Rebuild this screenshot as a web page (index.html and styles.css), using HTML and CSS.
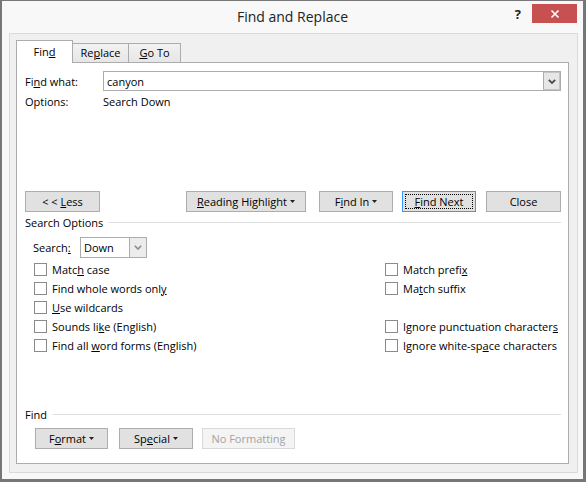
FILE: index.html
```html
<!DOCTYPE html>
<html>
<head>
<meta charset="utf-8">
<link rel="stylesheet" href="styles.css">
</head>
<body>
<div class="window">
  <div class="titlebar">
    <div class="title">Find and Replace</div>
    <div class="controls">
      <span class="help">?</span>
      <span class="close"><svg width="10" height="10" viewBox="0 0 10 10"><path d="M1.5 1.5 L8.5 8.5 M8.5 1.5 L1.5 8.5" stroke="#fff" stroke-width="1.6" fill="none"/></svg></span>
    </div>
  </div>
  <div class="client">
    <div class="tabs">
      <div class="tab tab-active tab-find">Fin<u>d</u></div>
      <div class="tab tab-replace">Re<u>p</u>lace</div>
      <div class="tab tab-goto"><u>G</u>o To</div>
    </div>
    <div class="panel">
      <div class="find-row">
        <span class="label">Fi<u>n</u>d what:</span>
        <div class="input">
          <span class="input-text">canyon</span>
          <span class="drop drop-dark"><svg width="8" height="5" viewBox="0 0 8 5"><path d="M0.8 0.8 L4 4 L7.2 0.8" stroke="#4a4a4a" stroke-width="1.8" fill="none"/></svg></span>
        </div>
      </div>
      <div class="opt-row">
        <span class="label">Options:</span>
        <span>Search Down</span>
      </div>
      <div class="btn-row">
        <button class="btn btn-less"><span>&lt; &lt;&nbsp;<u>L</u>ess</span></button>
        <button class="btn btn-reading"><span><u>R</u>eading Highlight</span><svg class="caret" width="5" height="3" viewBox="0 0 5 3"><path d="M0 0 H5 L2.5 3 Z" fill="#222"/></svg></button>
        <button class="btn btn-findin"><span>F<u>i</u>nd In</span><svg class="caret" width="5" height="3" viewBox="0 0 5 3"><path d="M0 0 H5 L2.5 3 Z" fill="#222"/></svg></button>
        <button class="btn btn-next"><span><u>F</u>ind Next</span></button>
        <button class="btn btn-close">Close</button>
      </div>
      <div class="group-head">
        <span>Search Options</span>
        <span class="rule"></span>
      </div>
      <div class="search-row">
        <span class="search-label">Search<u>:</u></span>
        <div class="select">
          <span class="input-text">Down</span>
          <span class="drop drop-light"><svg width="8" height="5" viewBox="0 0 8 5"><path d="M0.8 0.8 L4 4 L7.2 0.8" stroke="#8a8a8a" stroke-width="1.6" fill="none"/></svg></span>
        </div>
      </div>
      <div class="checks">
        <label class="check"><span class="cb"></span><span>Matc<u>h</u> case</span></label>
        <label class="check"><span class="cb"></span><span>Match prefi<u>x</u></span></label>
        <label class="check"><span class="cb"></span><span>Find whole words onl<u>y</u></span></label>
        <label class="check"><span class="cb"></span><span>Ma<u>t</u>ch suffix</span></label>
        <label class="check"><span class="cb"></span><span><u>U</u>se wildcards</span></label>
        <span class="check"></span>
        <label class="check"><span class="cb"></span><span>Sounds li<u>k</u>e (English)</span></label>
        <label class="check"><span class="cb"></span><span>Ignore punctuation character<u>s</u></span></label>
        <label class="check"><span class="cb"></span><span>Find all <u>w</u>ord forms (English)</span></label>
        <label class="check"><span class="cb"></span><span>Ignore white-sp<u>a</u>ce characters</span></label>
      </div>
      <div class="bottom">
        <div class="group-head group-find">
          <span>Find</span>
          <span class="rule"></span>
        </div>
        <div class="bottom-btns">
          <button class="btn btn-format"><span>F<u>o</u>rmat</span><svg class="caret" width="5" height="3" viewBox="0 0 5 3"><path d="M0 0 H5 L2.5 3 Z" fill="#222"/></svg></button>
          <button class="btn btn-special"><span>Sp<u>e</u>cial</span><svg class="caret" width="5" height="3" viewBox="0 0 5 3"><path d="M0 0 H5 L2.5 3 Z" fill="#222"/></svg></button>
          <button class="btn btn-disabled">No Formatting</button>
        </div>
      </div>
    </div>
  </div>
</div>
</body>
</html>
```
FILE: styles.css
```css
* { box-sizing: border-box; }
html, body { margin: 0; padding: 0; }
body {
  width: 586px;
  height: 482px;
  font-family: "Open Sans", "Noto Sans", sans-serif;
  font-size: 11px;
  color: #000;
  background: #fff;
}
u { text-underline-offset: 1px; }

.window {
  width: 586px;
  height: 482px;
  border-style: solid;
  border-color: #777777;
  border-width: 1px 3px 3px 2px;
  background: #f8f8f8;
  display: flex;
  flex-direction: column;
}

.titlebar {
  height: 32px;
  flex: none;
  display: grid;
  grid-template-columns: 1fr auto 1fr;
}
.title {
  grid-column: 2;
  font-size: 14px;
  line-height: 32px;
  color: #222;
}
.controls {
  grid-column: 3;
  display: flex;
  justify-content: flex-end;
  align-items: flex-start;
}
.help {
  font-weight: bold;
  font-size: 13px;
  line-height: 18px;
  margin-top: 4px;
  margin-right: 11px;
  color: #222;
}
.close {
  width: 45px;
  height: 19px;
  margin-top: 3px;
  margin-right: 6px;
  background: #c75050;
  display: flex;
  align-items: center;
  justify-content: center;
}

.client {
  flex: 1;
  margin: 0 5px 6px 7px;
  border: 1px solid #dadada;
  background: #f0f0f0;
  padding: 6px 8px 8px 6px;
  display: flex;
  flex-direction: column;
}

.tabs {
  height: 22px;
  flex: none;
  display: flex;
  align-items: flex-end;
}
.tab {
  position: relative;
  height: 19px;
  border: 1px solid #acacac;
  border-bottom: none;
  background: linear-gradient(#f2f2f2, #e6e6e6);
  display: flex;
  align-items: center;
  justify-content: center;
  padding-bottom: 1px;
}
.tab-active {
  height: 23px;
  margin-bottom: -1px;
  background: #fff;
  padding-top: 0;
  padding-bottom: 2px;
  z-index: 1;
}
.tab-find { width: 57px; }
.tab-replace { width: 57px; margin-left: -1px; }
.tab-goto { width: 53px; margin-left: -1px; }

.panel {
  flex: 1;
  border: 1px solid #acacac;
  background: #fff;
  padding: 0 7px 14px 8px;
  display: flex;
  flex-direction: column;
}

.label { width: 78px; flex: none; }

.find-row {
  margin-top: 8px;
  height: 20px;
  display: flex;
  align-items: center;
}
.input {
  flex: 1;
  height: 20px;
  border: 1px solid #acacac;
  background: #fff;
  display: flex;
  align-items: center;
}
.input-text { padding-left: 3px; flex: 1; }
.drop {
  width: 17px;
  height: 18px;
  display: flex;
  align-items: center;
  justify-content: center;
  border-left: 1px solid #acacac;
}
.drop-dark { background: #e6e6e6; border: 1px solid #c4c4c4; border-left-color: #acacac; }
.drop-light { background: #ececec; }

.opt-row {
  margin-top: 3px;
  height: 16px;
  line-height: 16px;
  display: flex;
}

.btn-row {
  margin-top: 81px;
  display: flex;
}
.btn {
  font-family: inherit;
  font-size: 11px;
  color: #000;
  height: 21px;
  padding: 0 0 1px 0;
  margin: 0;
  border: 1px solid #adadad;
  background: #e1e1e1;
  display: flex;
  align-items: center;
  justify-content: center;
  flex: none;
}
.caret { margin-left: 3px; }
.btn-less { width: 75px; }
.btn-reading { width: 120px; margin-left: 86px; }
.btn-findin { width: 74px; margin-left: 13px; }
.btn-next {
  width: 74px;
  margin-left: 9px;
  border-color: #3399ff;
  outline: 1px dotted #000;
  outline-offset: -4px;
}
.btn-close { width: 75px; margin-left: 10px; }

.group-head {
  margin-top: 3px;
  height: 16px;
  line-height: 16px;
  display: flex;
  align-items: center;
}
.rule {
  flex: 1;
  height: 1px;
  background: #dcdcdc;
  margin-left: 6px;
  margin-top: -1px;
}

.search-row {
  margin-top: 6px;
  padding-left: 8px;
  height: 21px;
  display: flex;
  align-items: center;
}
.search-label { width: 47px; }
.select {
  width: 67px;
  height: 21px;
  border: 1px solid #acacac;
  background: #fff;
  display: flex;
  align-items: center;
}
.select .drop { height: 19px; }

.checks {
  margin-top: 2px;
  padding-left: 9px;
  display: grid;
  grid-template-columns: 351px 1fr;
  grid-auto-rows: 19px;
}
.check {
  display: flex;
  align-items: center;
}
.cb {
  width: 13px;
  height: 13px;
  border: 1px solid #8a8a8a;
  background: #fff;
  margin-right: 5px;
  flex: none;
}

.bottom { margin-top: auto; }
.group-find { margin-top: 0; }
.bottom-btns {
  margin-top: 5px;
  padding-left: 10px;
  display: flex;
}
.btn-format { width: 73px; }
.btn-special { width: 74px; margin-left: 11px; }
.btn-disabled {
  width: 93px;
  margin-left: 9px;
  background: #f4f4f4;
  border-color: #d9d9d9;
  color: #a3a3a3;
}
```
